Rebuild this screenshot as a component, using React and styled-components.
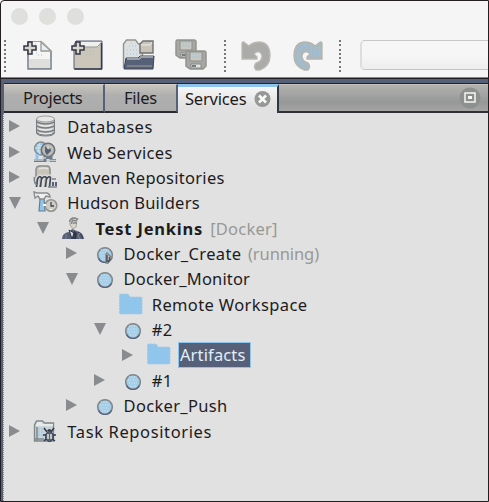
import React from 'react';
import styled, { createGlobalStyle } from 'styled-components';

const Global = createGlobalStyle`
  * { box-sizing: border-box; }
  body { margin: 0; overflow: hidden; }
`;

const Window = styled.div`
  width: 489px;
  height: 502px;
  border: 1px solid #231f20;
  border-radius: 4px 0 0 0;
  background: #f5f5f5;
  display: flex;
  flex-direction: column;
  overflow: hidden;
  font-family: 'Noto Sans', 'Open Sans', sans-serif;
  font-size: 16.5px;
  color: #1d1b1d;
`;

const TitleBar = styled.div`
  height: 31px;
  flex: none;
  display: flex;
  align-items: center;
  gap: 11px;
  padding-left: 10px;
`;

const Light = styled.span`
  width: 17px;
  height: 17px;
  border-radius: 50%;
  background: #dfdfde;
`;

const Toolbar = styled.div`
  height: 46px;
  flex: none;
  display: flex;
  padding: 7px 0 0 3px;
  overflow: hidden;
`;

const Grip = styled.span`
  flex: none;
  width: 2px;
  height: 32px;
  margin: 1px ${(p) => p.$after}px 0 ${(p) => p.$before || 0}px;
  background: repeating-linear-gradient(#77777b 0 2px, transparent 2px 4.25px);
`;

const ToolSvg = styled.svg`
  flex: none;
  width: 34px;
  height: 34px;
  margin-right: ${(p) => p.$gap}px;
`;

const Search = styled.div`
  flex: none;
  width: 150px;
  height: 30px;
  margin-top: 1px;
  border: 1px solid #c9c8c6;
  border-left: 2px solid #dedddb;
  border-bottom-color: #c7c4b9;
  border-radius: 5px;
  background: linear-gradient(#f6f6f6 50%, #eeeeee);
`;

const Panel = styled.div`
  flex: 1;
  display: flex;
  flex-direction: column;
  border-top: 1px solid #231f20;
  background: #566079;
  padding: 4px 0 0 3px;
  box-shadow: 0 -1px #88888a;
`;

const TabBar = styled.div`
  height: 30px;
  flex: none;
  display: flex;
  border-top: 1px solid #252331;
`;

const Tab = styled.div`
  width: ${(p) => p.$width}px;
  display: flex;
  align-items: center;
  padding: 0 0 2px ${(p) => p.$pad}px;
  letter-spacing: ${(p) => p.$spacing}px;
  border-bottom: ${(p) => (p.$active ? '0' : '2px solid #29292e')};
  border-right: 2px solid ${(p) => (p.$active ? '#303743' : '#566079')};
  border-top: ${(p) => (p.$active ? '3px solid #8fc5ec' : '1px solid #d4cfc4')};
  background: ${(p) =>
    p.$active
      ? 'linear-gradient(#f6f6f6, #e1e1e1 75%)'
      : 'linear-gradient(#c8c5bd, #afafaf 40%, #acacac)'};
`;

const TabText = styled.span`
  position: relative;
  top: ${(p) => p.$shift || 0}px;
  white-space: nowrap;
`;

const CloseIcon = styled.svg`
  width: 17px;
  height: 17px;
  margin-left: auto;
  margin-right: 6px;
`;

const TabFill = styled.div`
  flex: 1;
  display: flex;
  justify-content: flex-end;
  padding: 1px 6px 0 0;
  border-top: 1px solid #c4c1ba;
  border-bottom: 2px solid #303036;
  background: linear-gradient(#b2b2b0, #969898 65%, #a4a4a2);
`;

const Tree = styled.div`
  flex: 1;
  padding-top: 1.5px;
  border-left: 1px dotted #89898b;
  margin-left: -1px;
  background: #e1e1e1;
`;

const Row = styled.div`
  height: 25.36px;
  display: flex;
  align-items: center;
  padding-left: ${(p) => 5.3 + p.$level * 28.15}px;
`;

const Twisty = styled.svg`
  flex: none;
  width: 12px;
  height: 12px;
  margin: 0 12px 1.5px 0;
`;

const RowIcon = styled.svg`
  flex: none;
  width: 26px;
  height: 26px;
  margin-right: 6px;
`;

const Label = styled.span`
  height: 26px;
  line-height: 26px;
  padding: 0 ${(p) => (p.$selected ? 5 : 3)}px 0 2px;
  white-space: pre;
  letter-spacing: ${(p) => p.$spacing}px;
  font-weight: ${(p) => (p.$bold ? 700 : 400)};
  color: ${(p) => (p.$selected ? '#e0eff9' : 'inherit')};
  background: ${(p) => (p.$selected ? '#566079' : 'transparent')};
  box-shadow: ${(p) => (p.$selected ? 'inset 0 0 0 1px #8fc5ec' : 'none')};
`;

const Note = styled.span`
  margin-left: ${(p) => p.$gap}px;
  color: #989895;
  white-space: nowrap;
  letter-spacing: ${(p) => p.$spacing}px;
`;

const Plus = () => (
  <path d="M6 2h4v4h4v4h-4v4H6v-4H2V6h4z" fill="#d8d5cc" stroke="#343743" strokeWidth="1.5" />
);

const NewFile = () => (
  <ToolSvg $gap={14} viewBox="0 0 34 34">
    <path d="M6 2.5h14l9 9v18H6z" fill="#f5f5f4" stroke="#a2a19c" />
    <path d="M6 20h23v9H6z" fill="#dededc" />
    <path d="M19 3v9h10z" fill="#e6eff4" stroke="#9a9995" strokeWidth="1.3" />
    <path d="M13 5h3m-2 5h3m-1 6h4M14 14h2" stroke="#9ac8e7" strokeDasharray="1 2" />
    <path d="M6 3v27h23V13" fill="none" stroke="#7a8294" strokeWidth="1.4" />
    <g transform="translate(0 1)"><Plus /></g>
  </ToolSvg>
);

const NewProject = () => (
  <ToolSvg $gap={18} viewBox="0 0 34 34">
    <path d="M4 6l2-4h26v28H4z" fill="#cbc6ba" stroke="#566079" />
    <path d="M6 3h25l-3 5H5z" fill="#efefed" />
    <path d="M5 8h22l4-4" fill="none" stroke="#969895" />
    <path d="M4.5 30h27V4" fill="none" stroke="#353b4b" strokeWidth="1.4" />
    <path d="M17 9v9m3-9v9m3-9v9" stroke="#bab9b6" strokeDasharray="1 2" />
    <g transform="translate(0 1)"><Plus /></g>
  </ToolSvg>
);

const OpenProject = () => (
  <ToolSvg $gap={19} viewBox="0 0 34 34">
    <path d="M1.5 28V5l3-4h9l3 4h4v23z" fill="#dce0e1" stroke="#92958f" strokeWidth="1.4" />
    <path d="M7 7h9M5 11h12M5 15h10M9 4h3" stroke="#9ac9e9" strokeDasharray="1 2" />
    <path d="M18 5l3-3h10v12H18z" fill="#c8c4b9" stroke="#6d7071" strokeWidth="1.4" />
    <path d="M19 6h9l2-3" fill="none" stroke="#eee" />
    <path d="M4 19h12l2-2h14l-1 13H2l2-11z" fill="#566079" stroke="#3e4658" />
    <path d="M5 20h12l2-2h12" fill="none" stroke="#9aa0a5" strokeWidth="2" />
    <path d="M5 27h25" stroke="#7b8086" strokeWidth="2" />
  </ToolSvg>
);

const Disk = () => (
  <g>
    <path d="M2 1h17q2 0 2 2v13l-3 3H5l-4-3V3q0-2 1-2z" fill="#a7a8a5" stroke="#93958f" strokeWidth="1.5" />
    <path d="M5 2h12v9H5z" fill="#c9c7be" stroke="#8d908d" />
    <path d="M7 4h8M7 7h8" stroke="#9cc8e3" strokeDasharray="2 1" />
    <path d="M6 14h10v4H6z" fill="#e3e3df" stroke="#858a8d" />
    <path d="M7 16h4" stroke="#777b7c" strokeWidth="2" />
  </g>
);

const SaveAll = () => (
  <ToolSvg $gap={15} viewBox="0 0 34 34">
    <Disk />
    <g transform="translate(10 11)"><Disk /></g>
  </ToolSvg>
);

const arrow =
  'M2 4q1-2 3 0l4 3q4-4 11-4q10 1 10 14q0 10-10 14h-4q-3-3 0-7q5-1 6-6q0-4-3-5t-5 2l3 3v2H2z';

const Undo = () => (
  <ToolSvg $gap={16} viewBox="0 0 34 34">
    <path d={arrow} fill="#abacaa" stroke="#bab8b1" strokeWidth="1.3" />
  </ToolSvg>
);

const Redo = () => (
  <ToolSvg $gap={0} viewBox="0 0 34 34">
    <g transform="translate(34 0) scale(-1 1)">
      <path d={arrow} fill="#a9b9c2" stroke="#b5b4af" strokeWidth="1.3" />
      <path
        d="M5 8v9m4-7v7m4-6v4M12 8q8-5 12 3q4 8-4 15"
        fill="none"
        stroke="#93c5e8"
        strokeWidth="2"
        strokeDasharray="1 1.5"
      />
    </g>
  </ToolSvg>
);

const Ball = () => (
  <g>
    <circle cx="15" cy="14" r="7.3" fill="#a4cde8" stroke="#7e878b" strokeWidth="1.6" />
    <path d="M8.5 17.5a7.3 7.3 0 0 0 13 0" fill="none" stroke="#566079" strokeWidth="1.2" />
    <path
      d="M11 9h8M10 12h10M11 15h8M12 18h6"
      stroke="#dceaf2"
      strokeWidth="1"
      strokeDasharray="1 1.5"
    />
  </g>
);

const icons = {
  database: (
    <g stroke="#777d83">
      <path d="M3.5 5v13q0 4 9 4t9-4V5" fill="#cfcfcd" />
      <path d="M3.5 8q9 4 18 0m-18 4q9 4 18 0m-18 4q9 4 18 0m-18 3q9 4 18 0" fill="none" strokeWidth="1.4" />
      <path d="M6 11q7 2 13 0M6 15q7 2 13 0M6 19q7 2 13 0" fill="none" stroke="#f0f0ee" strokeWidth="1.2" />
      <ellipse cx="12.5" cy="5" rx="9" ry="3" fill="#e6e6e4" stroke="#a19f9a" />
    </g>
  ),
  web: (
    <g>
      <circle cx="8" cy="8.5" r="6.4" fill="#91c4e8" stroke="#828a8e" strokeWidth="1.5" />
      <path d="M7 3q-3 6 0 11M2 8h8M4 5l5 1m-5 5h4" fill="none" stroke="#cfdce0" strokeWidth="1.4" />
      <circle cx="15" cy="10" r="6.7" fill="#bdbbb4" stroke="#697278" strokeWidth="1.6" />
      <path d="M12 6l3 3 2-2 1 4-4 4-2-3z" fill="#566079" />
      <path d="M15 6v3l3-2" fill="none" stroke="#d7dfe1" />
      <path d="M1 20.5h11v-3h6v3h5" fill="none" stroke="#707b89" strokeWidth="3" />
      <path d="M1 20h9v-2h3M14 20.5h9" fill="none" stroke="#c3cacb" strokeWidth="1.3" />
      <path d="M4 14v5" stroke="#8fc5ec" strokeWidth="3" />
    </g>
  ),
  maven: (
    <g>
      <path d="M3 12V5q0-4 4-4h7q3 0 3 4v16H5z" fill="#c8c4b9" stroke="#8a8d8d" strokeWidth="1.5" />
      <path d="M6 4q5-2 9 0" fill="none" stroke="#e3e2de" strokeWidth="1.5" />
      <path
        d="M4 22V14q3-5 5-1v9m0-8q3-5 5-1v9m0-8q3-5 4-1l-1 9"
        fill="none"
        stroke="#dcdcda"
        strokeWidth="4"
      />
      <path
        d="M3.5 22l1-8q2-4 4-1l-1 9m1-8q3-4 5-1l-1 9m1-8q3-4 4-1l-1 9"
        fill="none"
        stroke="#414858"
        strokeWidth="1.7"
      />
      <path d="M1.5 12q-1 5 2 8" fill="none" stroke="#7b858c" strokeWidth="1.5" />
      <path d="M19 14h4M15 22h9" stroke="#7b858c" strokeWidth="1.5" />
      <path d="M19 17h2v4h-2zM22 17h2v4h-2z" fill="#566079" />
    </g>
  ),
  hudson: (
    <g>
      <path d="M7 9l4-1 1 13H6z" fill="#8fc5ec" stroke="#687e8d" strokeWidth="1.2" />
      <path d="M1 2l3 1h10q3 1 3 4l-4-1-2 3H7L5 6 2 8z" fill="#f0f0ee" stroke="#888d8d" strokeWidth="1.4" />
      <circle cx="18" cy="15.5" r="5.8" fill="#d0ccc1" stroke="#929693" strokeWidth="1.5" />
      <path d="M18 12v4h3" fill="none" stroke="#424957" strokeWidth="1.3" />
      <path d="M10 15h3M18 19v1" stroke="#fafafa" strokeWidth="2" />
    </g>
  ),
  jenkins: (
    <g>
      <path d="M9 4q3-4 7-1l-1 8-3 2-3-4z" fill="#dad5cb" stroke="#a6a39c" />
      <path d="M8.500 6q1-6 8-3l-2 2-3-1-1 4M12 7h4" fill="none" stroke="#858a89" strokeWidth="1.5" />
      <path d="M1 23q0-6 7-7l3-3 5 2q6 1 7 8z" fill="#566079" />
      <path d="M8 14l5 3-2 6z" fill="#d3d6d7" stroke="#303747" />
      <path d="M13 15l3 2-1 6h-3z" fill="#303747" />
      <path d="M17 16q4 2 5 7" stroke="#343b4b" fill="none" />
      <path d="M5 18v5M19 17l-2 2 2 4" stroke="#7d858c" fill="none" />
    </g>
  ),
  ball: <Ball />,
  running: (
    <g>
      <Ball />
      <path d="M17 12l5 5-4 5h-2v-9z" fill="#c9c6bc" stroke="#7d8083" strokeWidth="1.4" />
      <path d="M17 14v7m2-5l1 2-2 3" fill="none" stroke="#424b60" strokeWidth="1.4" />
    </g>
  ),
  folder: (
    <path
      d="M1.5 21V3q0-1 1-1H10l2 3h11q1 0 1 1v15q0 1-1 1H2.5q-1 0-1-1z"
      fill="#91c6ec"
      stroke="#a5c9df"
      strokeDasharray="2 1"
    />
  ),
  tasks: (
    <g>
      <path d="M1.5 22V6l2-4h6l2 2h9v18z" fill="#c8d3d7" stroke="#83898b" strokeWidth="1.4" />
      <path d="M3 6h17M4 4h5" stroke="#f2f2f0" strokeWidth="1.5" />
      <path d="M5 10h7M5 13h6M5 16h6" stroke="#8fc5ec" strokeDasharray="2 1" />
      <path d="M2 20h9M4 8v14" stroke="#7f888d" strokeWidth="1.5" />
      <path d="M11 9l3 4m7-4l-3 4M10 16h3m10 0h-4M11 22l3-3m8 3l-4-3" stroke="#303747" strokeWidth="1.5" />
      <ellipse cx="16.5" cy="17.5" rx="4" ry="5" fill="#566079" stroke="#393f4e" />
      <path d="M14 12q2-4 5 0" fill="#343b4b" />
      <path d="M15 15v5m3-5v5" stroke="#e8e8e4" strokeWidth="1.5" />
    </g>
  ),
};

const rows = [
  { level: 0, icon: 'database', text: 'Databases', spacing: 0.5 },
  { level: 0, icon: 'web', text: 'Web Services' },
  { level: 0, icon: 'maven', text: 'Maven Repositories', spacing: 0.27 },
  { level: 0, icon: 'hudson', text: 'Hudson Builders', spacing: 0.27 },
  { level: 1, icon: 'jenkins', text: 'Test Jenkins', bold: true, spacing: 0.8, note: '[Docker]', noteSpacing: 0.2, gap: 4 },
  { level: 2, icon: 'running', text: 'Docker_Create', spacing: 0.38, note: '(running)', noteSpacing: -0.1, gap: 3.5 },
  { level: 2, icon: 'ball', text: 'Docker_Monitor', spacing: 0.15 },
  { level: 3, icon: 'folder', text: 'Remote Workspace', spacing: 0.37, leaf: true },
  { level: 3, icon: 'ball', text: '#2' },
  { level: 4, icon: 'folder', text: 'Artifacts', spacing: 0.15, selected: true },
  { level: 3, icon: 'ball', text: '#1' },
  { level: 2, icon: 'ball', text: 'Docker_Push' },
  { level: 0, icon: 'tasks', text: 'Task Repositories', spacing: 0.62 },
];

const expanded = new Set(['Hudson Builders', 'Test Jenkins', 'Docker_Monitor', '#2']);

function TreeRow({ row }) {
  return (
    <Row $level={row.level}>
      <Twisty viewBox="0 0 12 12">
        {!row.leaf && (
          <path d={expanded.has(row.text) ? 'M0 0h12L6 12z' : 'M0 0v12l11-6z'} fill="#898b8e" />
        )}
      </Twisty>
      <RowIcon viewBox="0 0 26 26">{icons[row.icon]}</RowIcon>
      <Label $selected={row.selected} $bold={row.bold} $spacing={row.spacing ?? 0.3}>
        {row.text}
      </Label>
      {row.note && <Note $gap={row.gap} $spacing={row.noteSpacing}>{row.note}</Note>}
    </Row>
  );
}

export default function App() {
  return (
    <>
      <Global />
      <Window>
        <TitleBar>
          <Light />
          <Light />
          <Light />
        </TitleBar>
        <Toolbar>
          <Grip $after={16} />
          <NewFile />
          <NewProject />
          <OpenProject />
          <SaveAll />
          <Grip $after={14} />
          <Undo />
          <Redo />
          <Grip $before={15} $after={19} />
          <Search />
        </Toolbar>
        <Panel>
          <TabBar>
            <Tab $width={101} $pad={19} $spacing={-0.3}><TabText>Projects</TabText></Tab>
            <Tab $width={73} $pad={19} $spacing={-0.3}><TabText>Files</TabText></Tab>
            <Tab $width={101} $pad={7} $spacing={-0.2} $active>
              <TabText $shift={-1}>Services</TabText>
              <CloseIcon viewBox="0 0 17 17">
                <circle cx="8.5" cy="8" r="8" fill="#969896" />
                <path d="M5 4.500l7 7m0-7l-7 7" stroke="#fafafa" strokeWidth="2.5" />
              </CloseIcon>
            </Tab>
            <TabFill>
              <svg width="24" height="24" viewBox="0 0 24 24">
                <circle cx="12" cy="12" r="10.5" fill="#8c908f" />
                <rect x="7" y="7" width="10" height="9" fill="#8c8f8e" stroke="#f6f6f2" strokeWidth="1.5" />
                <rect x="10" y="10" width="4" height="3" fill="#f6f6f2" />
              </svg>
            </TabFill>
          </TabBar>
          <Tree>
            {rows.map((row) => (
              <TreeRow key={row.text} row={row} />
            ))}
          </Tree>
        </Panel>
      </Window>
    </>
  );
}
